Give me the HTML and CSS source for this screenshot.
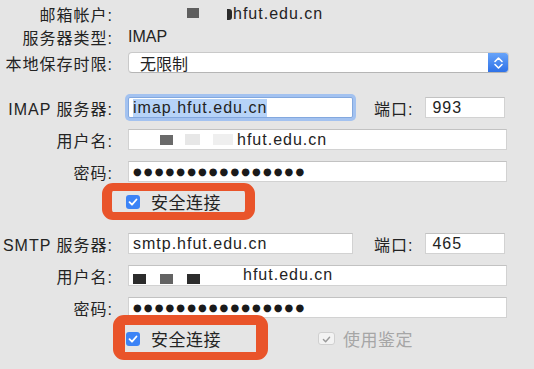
FILE: index.html
```html
<!DOCTYPE html>
<html lang="zh-CN">
<head>
    <meta charset="UTF-8">
    <title>帐户设置 - 服务器设置</title>
    <link rel="stylesheet" href="styles.css">
</head>
<body>
    <div class="pane">
        <!-- Account info -->
        <div class="row info first">
            <div class="label">邮箱帐户:</div>
            <div class="value"><span class="redact r1"></span><span class="glitch"></span>hfut.edu.cn</div>
        </div>
        <div class="row info">
            <div class="label">服务器类型:</div>
            <div class="value plain">IMAP</div>
        </div>
        <div class="row keep">
            <div class="label">本地保存时限:</div>
            <div class="select">
                <span class="select-text">无限制</span>
                <span class="stepper">
                    <svg width="21" height="20" viewBox="0 0 21 20"><path d="M7 8.5 L10.5 5 L14 8.5 M7 11.5 L10.5 15 L14 11.5" fill="none" stroke="#fff" stroke-width="1.6" stroke-linecap="round" stroke-linejoin="round"/></svg>
                </span>
            </div>
        </div>

        <!-- Incoming server -->
        <div class="row section">
            <div class="label">IMAP 服务器:</div>
            <div class="field host focused"><span class="selected">imap.hfut.edu.cn</span></div>
            <div class="port-label">端口:</div>
            <div class="field port">993</div>
        </div>
        <div class="row">
            <div class="label">用户名:</div>
            <div class="field wide user-a">
                <span class="redact dark-gray"></span>
                <span class="redact pale"></span>
                <span class="redact paler"></span>
                <span class="user-domain">hfut.edu.cn</span>
            </div>
        </div>
        <div class="row">
            <div class="label">密码:</div>
            <div class="field wide secret">●●●●●●●●●●●●●●●●</div>
        </div>
        <div class="row check-row top-check">
            <div class="mark mark-a">
                <span class="checkbox"><svg width="14" height="14" viewBox="0 0 14 14"><path d="M3.5 7.2 L6 9.7 L10.5 4.5" fill="none" stroke="#fff" stroke-width="1.8" stroke-linecap="round" stroke-linejoin="round"/></svg></span>
                <span class="check-text">安全连接</span>
            </div>
        </div>

        <!-- Outgoing server -->
        <div class="row smtp">
            <div class="label">SMTP 服务器:</div>
            <div class="field host">smtp.hfut.edu.cn</div>
            <div class="port-label">端口:</div>
            <div class="field port">465</div>
        </div>
        <div class="row">
            <div class="label">用户名:</div>
            <div class="field wide user-b">
                <span class="redact black r-a"></span>
                <span class="redact mid r-b"></span>
                <span class="redact black r-c"></span>
                <span class="user-domain">hfut.edu.cn</span>
            </div>
        </div>
        <div class="row">
            <div class="label">密码:</div>
            <div class="field wide secret">●●●●●●●●●●●●●●●●</div>
        </div>
        <div class="row check-row bottom-check">
            <div class="mark mark-b">
                <span class="checkbox"><svg width="14" height="14" viewBox="0 0 14 14"><path d="M3.5 7.2 L6 9.7 L10.5 4.5" fill="none" stroke="#fff" stroke-width="1.8" stroke-linecap="round" stroke-linejoin="round"/></svg></span>
                <span class="check-text">安全连接</span>
            </div>
            <div class="auth">
                <span class="checkbox disabled"><svg width="17" height="13" viewBox="0 0 17 13"><path d="M5 6.5 L7.5 9 L12 4" fill="none" stroke="#9a9a9a" stroke-width="1.6" stroke-linecap="round" stroke-linejoin="round"/></svg></span>
                <span class="check-text muted">使用鉴定</span>
            </div>
        </div>
    </div>
</body>
</html>
```

FILE: styles.css
```css
body {
    margin: 0;
    background: #e5e5e5;
    font-family: "Liberation Sans", "Noto Sans CJK SC", sans-serif;
    font-size: 16px;
    color: #232323;
}

.pane {
    display: flex;
    flex-direction: column;
    padding-top: 4px;
}

.row {
    display: flex;
    align-items: center;
    height: 21px;
    margin-top: 11px;
}

.row.info {
    height: 20px;
    margin-top: 3px;
}

.row.first {
    margin-top: 0;
}

.row.keep {
    margin-top: 5px;
}

.row.section {
    margin-top: 24px;
}

.row.smtp {
    margin-top: 13px;
}

.label {
    width: 113px;
    margin-right: 15px;
    flex-shrink: 0;
    text-align: right;
    letter-spacing: 1px;
    white-space: nowrap;
}

.value {
    display: flex;
    align-items: center;
    letter-spacing: 1px;
    padding-left: 59px;
}

.value.plain {
    padding-left: 0;
    letter-spacing: 0;
}

/* redacted bits of the address */
.redact {
    display: inline-block;
    flex-shrink: 0;
}

.redact.r1 {
    width: 12px;
    height: 10px;
    background: #5e5e5e;
    margin-right: 28px;
    margin-top: -3px;
}

.glitch {
    width: 5px;
    height: 11px;
    background: #2a2a2a;
    border-radius: 0 3px 3px 0;
    margin-right: 1px;
}

.select {
    width: 381px;
    height: 21px;
    box-sizing: border-box;
    background: #fff;
    border: 1px solid #c9c9c9;
    border-bottom-color: #b5b5b5;
    border-radius: 4px;
    display: flex;
    align-items: center;
    justify-content: space-between;
    overflow: hidden;
}

.select-text {
    padding-left: 11px;
}

.stepper {
    width: 21px;
    height: 21px;
    margin: -1px -1px -1px 0;
    background: linear-gradient(#6aa6fa, #2c6fe6);
    border-radius: 0 4px 4px 0;
    display: flex;
    align-items: center;
    justify-content: center;
}

.field {
    height: 21px;
    box-sizing: border-box;
    background: #fff;
    border: 1px solid #d2d2d2;
    border-top-color: #c2c2c2;
    padding: 0 4px;
    display: flex;
    align-items: center;
    letter-spacing: 1px;
    white-space: nowrap;
    overflow: hidden;
}

.field.host {
    width: 225px;
}

.field.focused {
    border-color: #83a8de;
    border-radius: 2px;
    box-shadow: 0 0 0 3px #a3c2f0;
}

.selected {
    background: #b6d3f8;
}

.field.wide {
    width: 379px;
}

.field.port {
    width: 80px;
    padding-left: 6px;
}

.port-label {
    margin-left: 21px;
    margin-right: 12px;
    letter-spacing: 1px;
}

.user-a .dark-gray {
    width: 13px;
    height: 10px;
    background: #6a6a6a;
    margin-left: 27px;
}

.user-a .pale {
    width: 15px;
    height: 11px;
    background: #e7e7e7;
    margin-left: 12px;
}

.user-a .paler {
    width: 20px;
    height: 11px;
    background: #efefef;
    margin-left: 13px;
}

.user-a .user-domain {
    margin-left: 4px;
}

.user-b {
    align-items: flex-end;
    padding-bottom: 1px;
}

.user-b .redact {
    width: 13px;
    height: 10px;
}

.user-b .black {
    background: #2c2c2c;
}

.user-b .mid {
    background: #636363;
}

.user-b .r-a {
    margin-left: 0;
}

.user-b .r-b,
.user-b .r-c {
    margin-left: 14px;
}

.user-b .user-domain {
    margin-left: 43px;
    align-self: center;
}

.secret {
    font-family: "DejaVu Sans", sans-serif;
    font-size: 10px;
    letter-spacing: 2.1px;
    color: #1a1a1a;
}

/* check rows, with the orange marker drawn round them */
.check-row {
    height: auto;
}

.row.top-check {
    margin-top: 1px;
}

.row.bottom-check {
    margin-top: -3px;
}

.mark {
    display: flex;
    align-items: center;
    border: solid #e9542a;
    border-radius: 11px;
    box-sizing: border-box;
}

.mark-a {
    margin-left: 102px;
    border-width: 8px 10px;
    height: 37px;
    padding: 0 24px 0 14px;
}

.mark-b {
    margin-left: 113px;
    border-width: 10px 12px 8px 12px;
    height: 45px;
    padding: 0 35px 0 1px;
}

.checkbox {
    width: 14px;
    height: 14px;
    border-radius: 3px;
    background: #3c83f6;
    display: flex;
    flex-shrink: 0;
    margin-right: 11px;
}

.checkbox.disabled {
    width: 17px;
    height: 13px;
    background: #f3f3f3;
    border: 1px solid #d0d0d0;
    box-sizing: border-box;
    margin-right: 8px;
}

.check-text {
    font-size: 17px;
    letter-spacing: 0.5px;
}

.check-text.muted {
    color: #a6a6a6;
}

.auth {
    display: flex;
    align-items: center;
    margin-left: 50px;
    margin-top: 2px;
}
```
